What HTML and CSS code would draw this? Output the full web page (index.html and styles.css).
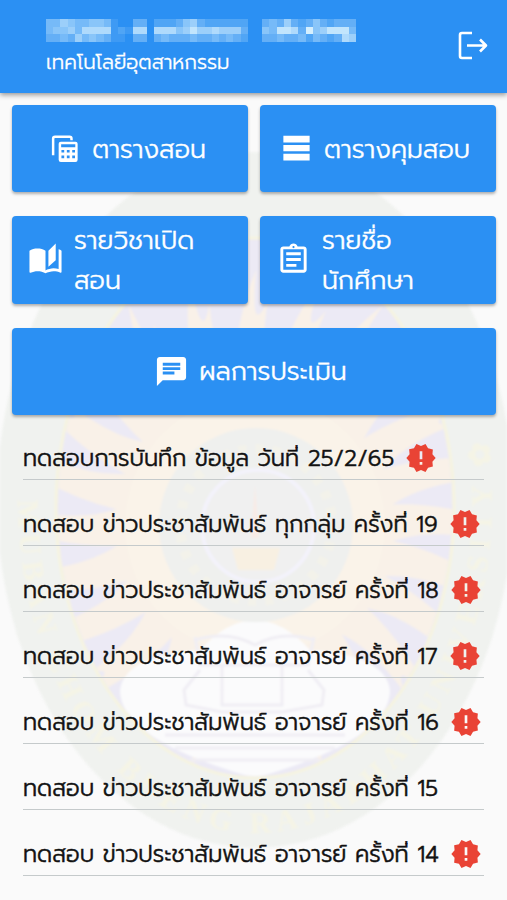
FILE: index.html
```
<!DOCTYPE html>
<html lang="th">
<head>
    <meta charset="UTF-8">
    <meta name="viewport" content="width=device-width, initial-scale=1.0">
    <title>เทคโนโลยีอุตสาหกรรม</title>
    <link rel="stylesheet" href="styles.css">
</head>
<body>
    <svg class="seal" viewBox="0 0 507 900" aria-hidden="true">
        <defs>
            <clipPath id="inner"><ellipse cx="255" cy="508" rx="197" ry="268"/></clipPath>
            <path id="ring" d="M18 500 A237 333 0 0 0 492 500 A237 333 0 0 0 255 167"/>
        </defs>
        <ellipse cx="255" cy="500" rx="258" ry="348" fill="#f0f2ef"/>
        <ellipse cx="255" cy="508" rx="199" ry="270" fill="#eceaf5" stroke="#f6f4e0" stroke-width="3"/>
        <g clip-path="url(#inner)">
            <g id="rays" fill="#f9f1e8"></g>
            <circle cx="255" cy="525" r="130" fill="#faf5ea" opacity=".6"/>
            <path d="M120 690 Q125 655 200 650 Q255 590 310 650 Q385 655 390 690 Q390 740 255 778 Q120 740 120 690z" fill="#fbfbfc"/>
            <g fill="none" stroke="#f0eef4" stroke-width="3">
                <path d="M195 637 L200 665 H308 L314 637 M222 665 V705 H282 V665 M200 670 L184 690 L186 705 L222 712 H282 L322 705 L324 690 L308 670"/>
                <path d="M195 640 Q228 630 255 645 Q282 630 314 640 M165 735 H345 M175 748 H335 M190 760 H320"/>
            </g>
        </g>
        <circle cx="256" cy="525" r="97" fill="#eff0ee"/>
        <circle cx="256" cy="525" r="76" fill="none" stroke="#f3f2ea" stroke-width="10" stroke-dasharray="8 9"/>
        <circle cx="258" cy="526" r="56" fill="#f0f0f0" stroke="#f3f2fb" stroke-width="4"/>
        <path d="M255 485 L259 538 H251z" fill="#f8ebe6"/>
        <path d="M232 548 H280 L274 570 H238z" fill="#f8f0e2"/>
        <text class="seal-text"><textPath href="#ring" startOffset="0" textLength="960">MUBAN CHOM BUENG RAJABHAT UNIVERSITY ✿</textPath></text>
    </svg>

    <header class="header">
        <div class="user">
            <svg class="user-name" id="userName" viewBox="0 0 43 3" preserveAspectRatio="none"></svg>
            <div class="faculty">เทคโนโลยีอุตสาหกรรม</div>
        </div>
        <svg class="logout" viewBox="0 0 32 32">
            <path d="M16 4H6a2 2 0 0 0-2 2v21a2 2 0 0 0 2 2H16M11 16.500H29.500M24 10.500l6 6-6 6"/>
        </svg>
    </header>

    <main>
        <nav class="menu">
            <a class="menu-item">
                <svg class="icon" viewBox="0 0 24 24">
                    <path fill="none" stroke="#fff" stroke-width="1.700" d="M4.200 16.700V5.300a1.300 1.300 0 0 1 1.300-1.300H15.500a1.300 1.300 0 0 1 1.300 1.300v1"/>
                    <path fill-rule="evenodd" d="M9.500 7.300h10a1.500 1.500 0 0 1 1.500 1.500v10.900a1.500 1.500 0 0 1-1.500 1.500h-10A1.500 1.500 0 0 1 8 19.700V8.800a1.500 1.500 0 0 1 1.500-1.500zM9.700 9v2.200h9.700V9zM9.900 13v1.800h1.900V13zm3.700 0v1.800h1.900V13zm3.700 0v1.800h1.900V13zM9.900 16.800v1.900h1.900v-1.900zm3.700 0v1.900h1.900v-1.900zm3.700 0v1.900h1.900v-1.900z"/>
                </svg>
                <span>ตารางสอน</span>
            </a>
            <a class="menu-item">
                <svg class="icon" viewBox="0 0 24 24"><path d="M3 3.200h18v4.600H3zM3 9.600h18v4.200H3zM3 15.600h18v4.600H3z"/></svg>
                <span>ตารางคุมสอบ</span>
            </a>
            <a class="menu-item">
                <svg class="icon" viewBox="0 0 24 24"><path d="M19 1l-5 5v11l5-4.500V1zM1 6v14.650c0 .25.25.5.5.5.1 0 .15-.05.25-.05C3.100 20.450 5.050 20 6.500 20c1.950 0 4.050.4 5.500 1.500V6c-1.450-1.100-3.550-1.500-5.500-1.500S2.450 4.900 1 6zm22 13.500V6c-.6-.45-1.250-.75-2-1v13.500c-1.100-.35-2.300-.5-3.500-.5-1.700 0-4.150.65-5.500 1.500v2c1.350-.85 3.800-1.500 5.500-1.500 1.650 0 3.350.3 4.750 1.050.1.05.15.05.25.05.25 0 .5-.25.5-.5v-1.100z"/></svg>
                <span>รายวิชาเปิด<br>สอน</span>
            </a>
            <a class="menu-item">
                <svg class="icon" viewBox="0 0 24 24"><path d="M7 15h7v2H7zm0-4h10v2H7zm0-4h10v2H7zm12-4h-4.180C14.400 1.840 13.300 1 12 1c-1.300 0-2.400.84-2.820 2H5c-1.100 0-2 .9-2 2v14c0 1.100.9 2 2 2h14c1.100 0 2-.9 2-2V5c0-1.100-.9-2-2-2zm-7-.25c.41 0 .75.34.75.75s-.34.75-.75.75-.75-.34-.75-.75.34-.75.75-.75zM19 19H5V5h14v14z"/></svg>
                <span>รายชื่อ<br>นักศึกษา</span>
            </a>
            <a class="menu-item wide">
                <svg class="icon" viewBox="0 0 24 24"><path d="M20 2H4c-1.100 0-1.990.9-1.990 2L2 22l4-4h14c1.100 0 2-.9 2-2V4c0-1.100-.9-2-2-2zM6 9h12v2H6V9zm8 5H6v-2h8v2zm4-6H6V6h12v2z"/></svg>
                <span>ผลการประเมิน</span>
            </a>
        </nav>

        <svg class="symbols">
            <symbol id="badge" viewBox="0 0 24 24"><path d="M23 12l-2.440-2.780.34-3.680-3.610-.82-1.890-3.180L12 3 8.600 1.540 6.710 4.720l-3.610.81.34 3.680L1 12l2.440 2.780-.34 3.690 3.610.82 1.890 3.180L12 21l3.400 1.460 1.890-3.180 3.610-.82-.34-3.680L23 12zM13 17h-2v-2h2v2zm0-4h-2V7h2v6z"/></symbol>
        </svg>
        <ul class="news">
            <li>ทดสอบการบันทึก ข้อมูล วันที่ 25/2/65 <svg class="badge"><use href="#badge"/></svg></li>
            <li>ทดสอบ ข่าวประชาสัมพันธ์ ทุกกลุ่ม ครั้งที่ 19 <svg class="badge"><use href="#badge"/></svg></li>
            <li>ทดสอบ ข่าวประชาสัมพันธ์ อาจารย์ ครั้งที่ 18 <svg class="badge"><use href="#badge"/></svg></li>
            <li>ทดสอบ ข่าวประชาสัมพันธ์ อาจารย์ ครั้งที่ 17 <svg class="badge"><use href="#badge"/></svg></li>
            <li>ทดสอบ ข่าวประชาสัมพันธ์ อาจารย์ ครั้งที่ 16 <svg class="badge"><use href="#badge"/></svg></li>
            <li>ทดสอบ ข่าวประชาสัมพันธ์ อาจารย์ ครั้งที่ 15</li>
            <li>ทดสอบ ข่าวประชาสัมพันธ์ อาจารย์ ครั้งที่ 14 <svg class="badge"><use href="#badge"/></svg></li>
        </ul>
    </main>

    <script>
        const svgNS = 'http://www.w3.org/2000/svg';

        // masked user name, one digit per block (0 = clear, 9 = white)
        const mask = [
            '4465445541003302223563222222003436323532333',
            '4556477771217707775686676663005488739568884',
            '3343645431103303433343343432003343342432376'
        ];
        const userName = document.getElementById('userName');
        mask.forEach(function(row, y) {
            row.split('').forEach(function(level, x) {
                const rect = document.createElementNS(svgNS, 'rect');
                rect.setAttribute('x', x);
                rect.setAttribute('y', y);
                rect.setAttribute('width', 1);
                rect.setAttribute('height', 1);
                rect.setAttribute('fill-opacity', level / 10);
                userName.appendChild(rect);
            });
        });

        // sun rays of the seal
        const rays = document.getElementById('rays');
        for (let i = 0; i < 24; i++) {
            const ray = document.createElementNS(svgNS, 'path');
            ray.setAttribute('d', 'M250 500 L282 410 Q256 370 268 300 Q250 340 256 270 Q228 340 236 410z');
            ray.setAttribute('transform', 'rotate(' + (i * 15) + ' 255 525)');
            rays.appendChild(ray);
        }
    </script>
</body>
</html>
```
FILE: styles.css
```
* {
    box-sizing: border-box;
}
body {
    font-family: Prompt, "Noto Sans Thai", "Noto Sans", sans-serif;
    font-weight: 300;
    background-color: #fafafa;
    margin: 0;
    height: 900px;
    overflow: hidden;
}
.seal {
    position: absolute;
    top: 0;
    left: 0;
    width: 507px;
    height: 900px;
    z-index: -1;
    filter: blur(1.2px);
}
.seal-text {
    font-family: "Liberation Serif", serif;
    font-size: 30px;
    font-weight: bold;
    fill: #f5f4e6;
}
.header {
    display: flex;
    justify-content: space-between;
    align-items: center;
    height: 93px;
    padding: 0 19px 3px 46px;
    background-color: #2b90f3;
    color: #fff;
    box-shadow: 0 2px 5px rgba(0, 0, 0, 0.4);
}
.user {
    padding-top: 6px;
}
.user-name {
    display: block;
    width: 310px;
    height: 23px;
    fill: #e8faff;
    shape-rendering: crispEdges;
}
.faculty {
    margin-top: 5px;
    font-size: 20px;
    line-height: 30px;
    -webkit-text-stroke: 0.3px #fff;
}
.logout {
    width: 32px;
    height: 32px;
    fill: none;
    stroke: #fff;
    stroke-width: 2.6;
    stroke-linejoin: round;
}
.menu {
    display: grid;
    grid-template-columns: 1fr 1fr;
    grid-auto-rows: 87.3px;
    gap: 24px 12px;
    padding: 12px 11px 0 12px;
}
.menu-item {
    display: flex;
    align-items: center;
    justify-content: center;
    gap: 10px;
    padding-right: 7px;
    border-radius: 4px;
    background-color: #2b90f3;
    color: #fff;
    font-size: 25.5px;
    line-height: 39.5px;
    box-shadow: 0 2px 3px rgba(0, 0, 0, 0.3);
    -webkit-text-stroke: 0.4px #fff;
}
.menu-item span {
    padding-top: 2px;
}
.menu-item:nth-child(3),
.menu-item:nth-child(4) {
    justify-content: flex-start;
    gap: 11px;
    padding-left: 16px;
}
.wide {
    grid-column: span 2;
}
.icon {
    width: 35px;
    height: 35px;
    fill: #fff;
    flex-shrink: 0;
}
.symbols {
    display: none;
}
.news {
    list-style: none;
    margin: -1px 0 0;
    padding: 0 23px;
}
.news li {
    display: flex;
    align-items: flex-end;
    gap: 11px;
    height: 66px;
    padding-bottom: 3px;
    border-bottom: 1px solid #c5cacb;
    color: #111;
    font-size: 22.7px;
    line-height: 34px;
    white-space: nowrap;
    -webkit-text-stroke: 0.5px #111;
}
.badge {
    width: 32px;
    height: 32px;
    fill: #e94335;
    margin-bottom: 2px;
    flex-shrink: 0;
}
```
